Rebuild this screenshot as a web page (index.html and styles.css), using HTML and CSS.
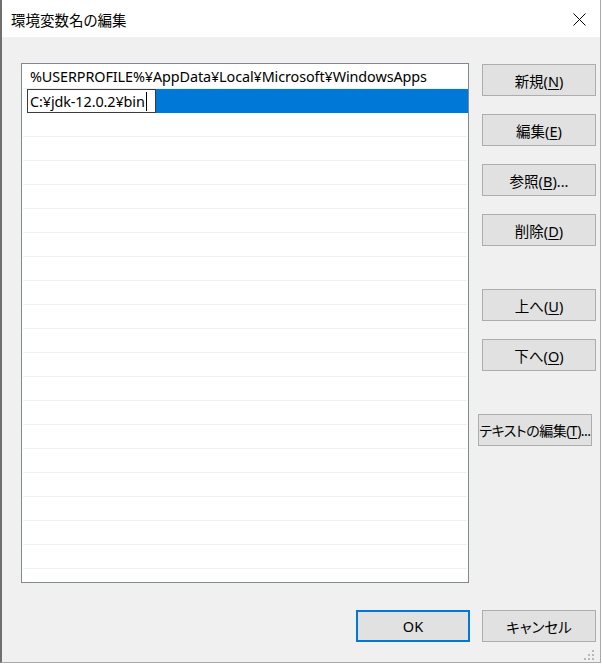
FILE: index.html
```html
<!DOCTYPE html>
<html lang="ja">
<head>
<meta charset="utf-8">
<title>環境変数名の編集</title>
<link rel="stylesheet" href="styles.css">
</head>
<body>
<div class="window">
  <div class="titlebar">
    <span class="title">環境変数名の編集</span>
    <svg class="close" width="13" height="13" viewBox="0 0 13 13" aria-hidden="true">
      <path d="M0.5 0.5 L12.5 12.5 M12.5 0.5 L0.5 12.5" stroke="#000" stroke-width="1" fill="none"/>
    </svg>
  </div>
  <div class="main">
    <div class="list">
      <div class="row"><span class="text">%USERPROFILE%¥AppData¥Local¥Microsoft¥WindowsApps</span></div>
      <div class="row selected">
        <div class="edit">C:¥jdk-12.0.2¥bin<span class="caret"></span></div>
        <div class="sel"></div>
      </div>
      <div class="row"></div>
      <div class="row"></div>
      <div class="row"></div>
      <div class="row"></div>
      <div class="row"></div>
      <div class="row"></div>
      <div class="row"></div>
      <div class="row"></div>
      <div class="row"></div>
      <div class="row"></div>
      <div class="row"></div>
      <div class="row"></div>
      <div class="row"></div>
      <div class="row"></div>
      <div class="row"></div>
      <div class="row"></div>
      <div class="row"></div>
      <div class="row"></div>
      <div class="row"></div>
      <div class="row"></div>
    </div>
    <div class="buttons">
      <div class="group">
        <button class="btn">新規(<u>N</u>)</button>
        <button class="btn">編集(<u>E</u>)</button>
        <button class="btn">参照(<u>B</u>)...</button>
        <button class="btn">削除(<u>D</u>)</button>
      </div>
      <div class="group">
        <button class="btn">上へ(<u>U</u>)</button>
        <button class="btn">下へ(<u>O</u>)</button>
      </div>
      <div class="group">
        <button class="btn btn-wide">テキストの編集(<u>T</u>)...</button>
      </div>
    </div>
  </div>
  <div class="footer">
    <button class="btn btn-default">OK</button>
    <button class="btn">キャンセル</button>
  </div>
  <svg class="grip" width="12" height="10" viewBox="0 0 12 10" aria-hidden="true">
    <rect x="8" y="0" width="2" height="2" fill="#b8b8b8"/>
    <rect x="4" y="4" width="2" height="2" fill="#b8b8b8"/>
    <rect x="8" y="4" width="2" height="2" fill="#b8b8b8"/>
    <rect x="0" y="8" width="2" height="2" fill="#b8b8b8"/>
    <rect x="4" y="8" width="2" height="2" fill="#b8b8b8"/>
    <rect x="8" y="8" width="2" height="2" fill="#b8b8b8"/>
  </svg>
</div>
</body>
</html>
```

FILE: styles.css
```css
* {
  box-sizing: border-box;
}

html, body {
  margin: 0;
  padding: 0;
  background: #ffffff;
}

body {
  font-family: "Segoe UI", "Noto Sans", "Noto Sans CJK JP", sans-serif;
  font-size: 15px;
  color: #000;
  font-feature-settings: "palt";
}

.window {
  position: relative;
  width: 601px;
  height: 663px;
  background: #f0f0f0;
  border-left: 2px solid #6f6f6f;
  border-right: 1px solid #a9a9a9;
  border-bottom: 1px solid #a9a9a9;
  display: flex;
  flex-direction: column;
}

.titlebar {
  height: 37px;
  background: #ffffff;
  display: flex;
  align-items: center;
  padding: 0 14px 0 9px;
}

.title {
  font-family: "Noto Sans CJK JP", sans-serif;
  font-size: 14.5px;
  margin-top: 2px;
}

.close {
  margin-left: auto;
  display: block;
  margin-top: 1px;
}

.main {
  display: flex;
  padding: 26px 4px 0 19px;
  gap: 13px;
}

.list {
  width: 448px;
  height: 520px;
  background: #fff;
  border: 1px solid #828790;
  padding: 1px 1px 0 1px;
  overflow: hidden;
}

.row {
  height: 24px;
  border-bottom: 1px solid #f0f0f0;
  padding-left: 7px;
  display: flex;
  align-items: center;
  white-space: nowrap;
}

.row .text {
  font-size: 14.4px;
  letter-spacing: -0.1px;
}

.row.selected {
  border-bottom: none;
  padding-left: 4px;
  padding-right: 0;
  margin-right: -1px;
  align-items: stretch;
}

.edit {
  width: 129px;
  height: 24px;
  border: 1px solid #3c3c3c;
  background: #fff;
  padding-left: 2px;
  display: flex;
  align-items: center;
  font-size: 14.4px;
  letter-spacing: -0.1px;
}

.caret {
  display: inline-block;
  width: 1px;
  height: 19px;
  background: #000;
  margin-left: 1px;
}

.sel {
  flex: 1;
  background: #0078d7;
}

.buttons {
  width: 114px;
  padding-top: 1px;
  display: flex;
  flex-direction: column;
  gap: 43px;
}

.group {
  display: flex;
  flex-direction: column;
  gap: 18px;
}

.btn {
  width: 114px;
  height: 32px;
  background: #e1e1e1;
  border: 1px solid #adadad;
  font-family: "Segoe UI", "Noto Sans", "Noto Sans CJK JP", sans-serif;
  font-size: 14.5px;
  font-feature-settings: "palt";
  color: #000;
  padding: 0;
  margin: 0;
  white-space: nowrap;
  text-align: center;
}

.btn u {
  text-underline-offset: 2px;
  text-decoration-thickness: 1px;
}

.btn-wide {
  margin-left: -4px;
  font-size: 14px;
  letter-spacing: -0.5px;
}

.btn-default {
  border: 2px solid #0078d7;
}

.footer {
  display: flex;
  justify-content: flex-end;
  gap: 12px;
  padding: 27px 4px 0 0;
}

.grip {
  position: absolute;
  right: 4px;
  bottom: 2px;
}
```
